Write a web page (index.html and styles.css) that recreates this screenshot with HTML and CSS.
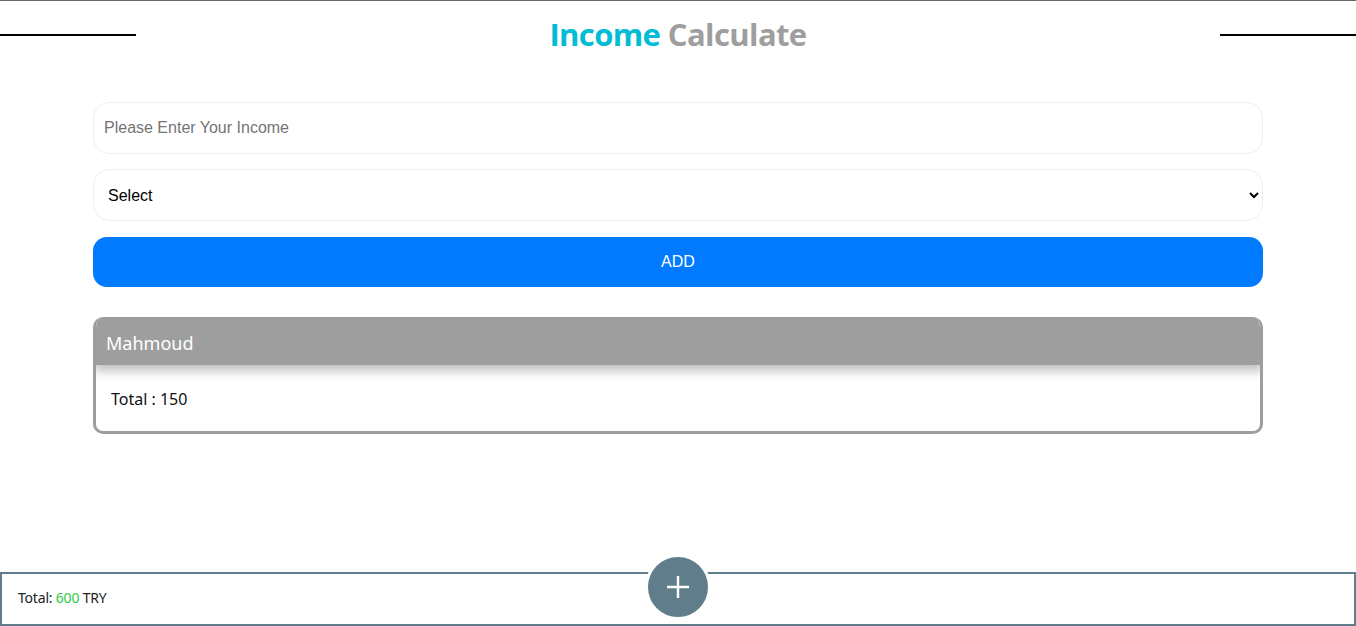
FILE: index.html
```html
<!DOCTYPE html>
<html>
<head>
<meta charset="utf-8">
<link rel="stylesheet" href="styles.css">
</head>
<body>
<div class="page">
  <header class="top">
    <span class="line"></span>
    <h1 class="title"><span class="t1">Income</span> <span class="t2">Calculate</span></h1>
    <span class="line"></span>
  </header>
  <main class="content">
    <input class="field" type="text" placeholder="Please Enter Your Income">
    <select class="field select"><option>Select</option></select>
    <button class="add">ADD</button>
    <div class="card">
      <div class="card-head">Mahmoud</div>
      <div class="card-body">Total : 150</div>
    </div>
  </main>
  <footer class="foot">
    <span class="sum">Total: <span class="num">600</span> TRY</span>
    <button class="plus" aria-label="add">
      <svg width="24" height="24" viewBox="0 0 24 24"><path d="M12 1v22M1 12h22" stroke="#fff" stroke-width="2.4" fill="none"/></svg>
    </button>
  </footer>
</div>
</body>
</html>
```
FILE: styles.css
```css
* { box-sizing: border-box; }
html, body { margin: 0; padding: 0; }
body { font-family: "Noto Sans", "Open Sans", sans-serif; background: #fff; }
.page {
  min-height: 626px;
  display: flex;
  flex-direction: column;
  border-top: 1px solid #666;
}
.top {
  display: flex;
  align-items: center;
  justify-content: space-between;
  height: 67px;
}
.line { width: 136px; height: 2px; background: #000; }
.title {
  margin: 0;
  font-family: "Open Sans", sans-serif;
  font-size: 31px;
  font-weight: 700;
  letter-spacing: -0.6px;
  line-height: 1;
}
.t1 { color: #00bcd4; }
.t2 { color: #9e9e9e; }
.content {
  width: 1170px;
  margin: 34px auto 0;
  display: flex;
  flex-direction: column;
}
.field {
  height: 52px;
  border: 1px solid #eee;
  border-radius: 16px;
  padding: 0 10px;
  font-family: Arial, "Liberation Sans", sans-serif;
  font-size: 16px;
  color: #000;
  background: #fff;
  outline: none;
  margin-bottom: 15px;
}
.field::placeholder { color: #757575; }
.add {
  height: 50px;
  border: none;
  border-radius: 14px;
  background: #007bff;
  color: #fff;
  font-family: Arial, "Liberation Sans", sans-serif;
  font-size: 16px;
  margin-top: 1px;
}
.card {
  margin-top: 30px;
  border: 3px solid #9e9e9e;
  border-top: none;
  border-radius: 10px;
  overflow: hidden;
}
.card-head {
  background: #9e9e9e;
  color: #fff;
  height: 48px;
  display: flex;
  align-items: center;
  padding: 3px 0 0 13px;
  font-size: 18px;
  box-shadow: 0 6px 10px rgba(0,0,0,0.25);
  position: relative;
  margin: 0 -3px;
}
.card-body {
  height: 66px;
  display: flex;
  align-items: center;
  padding: 1px 0 0 15px;
  font-size: 16px;
  color: #111;
}
.foot {
  margin-top: auto;
  height: 54px;
  border: 2px solid #607d8b;
  position: relative;
  display: flex;
  align-items: center;
  padding-left: 16px;
}
.sum { font-size: 14px; color: #222; margin-top: -3px; letter-spacing: -0.2px; }
.num { color: #2ecc40; }
.plus {
  position: absolute;
  left: 50%;
  top: -20px;
  transform: translateX(-50%);
  width: 66px;
  height: 66px;
  border-radius: 50%;
  background: #607d8b;
  border: 3px solid #fff;
  display: flex;
  align-items: center;
  justify-content: center;
  padding: 0;
}
```
